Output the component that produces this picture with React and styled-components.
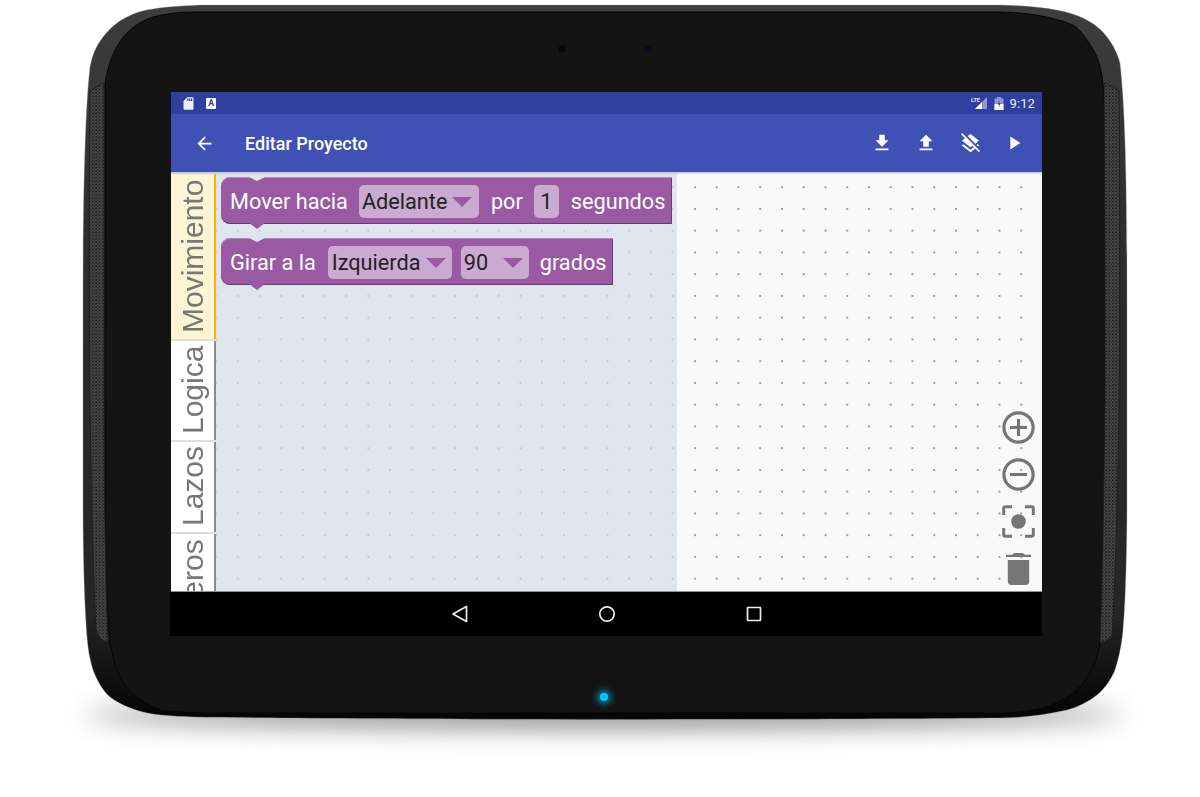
import React from "react";
import styled, { createGlobalStyle } from "styled-components";

const Global = createGlobalStyle`
  html, body { margin: 0; padding: 0; background: #fff; }
  * { box-sizing: border-box; }
`;

const Page = styled.div`
  position: relative;
  width: 1200px;
  height: 797px;
  padding: 92px 158px 161px 171px;
  overflow: hidden;
  background: #fff;
  font-family: Roboto, "Liberation Sans", sans-serif;
`;
const Bezel = styled.svg`
  position: absolute;
  left: 0;
  top: 0;
`;
const Screen = styled.div`
  position: relative;
  width: 871px;
  height: 544px;
  display: flex;
  flex-direction: column;
  background: #000;
`;
const StatusBar = styled.div`
  height: 22px;
  flex: none;
  background: #303f9f;
  display: flex;
  align-items: center;
  padding: 0 7px 0 10px;
  color: #eceef8;
`;
const StatusIcons = styled.div`
  display: flex;
  align-items: center;
  gap: ${(p) => p.$gap}px;
`;
const Spacer = styled.div`
  flex: 1;
`;
const Time = styled.span`
  font-size: 13px;
  font-weight: 400;
  letter-spacing: 0.1px;
`;
const NoteA = styled.span`
  width: 10px;
  height: 11px;
  border-radius: 1px;
  background: #fff;
  color: #303f9f;
  font-size: 8.5px;
  font-weight: 700;
  line-height: 10px;
  text-align: center;
`;
const AppBar = styled.div`
  height: 58px;
  flex: none;
  background: #3f51b5;
  display: flex;
  align-items: center;
  color: #fff;
  padding-left: 23px;
`;
const Title = styled.div`
  font-size: 18px;
  font-weight: 500;
  margin-left: 30px;
  flex: 1;
  margin-top: 1px;
`;
const Action = styled.button`
  width: 44px;
  height: 44px;
  border: 0;
  padding: 0;
  background: none;
  color: #fff;
  display: flex;
  align-items: center;
  justify-content: center;
`;
const Actions = styled.div`
  display: flex;
  padding-right: 6px;
`;
const Content = styled.div`
  position: relative;
  flex: 1;
  min-height: 0;
  display: flex;
  overflow: hidden;
  border-bottom: 1px solid #8e9094;
  &::before {
    content: "";
    position: absolute;
    left: 0;
    right: 0;
    top: 0;
    height: 3px;
    z-index: 2;
    background: linear-gradient(#c9c9cb, rgba(220, 220, 220, 0));
  }
`;
const Tabs = styled.div`
  width: 45px;
  flex: none;
  display: flex;
  flex-direction: column;
  gap: 2px;
  padding-top: 2px;
  background: #dedede;
  overflow: hidden;
`;
const Tab = styled.div`
  flex: none;
  height: ${(p) => p.$h}px;
  background: ${(p) => (p.$active ? "#fff4d4" : "#fff")};
  border-right: 2px solid ${(p) => (p.$active ? "#ffb300" : "#8b8b8b")};
  display: flex;
  justify-content: center;
  padding-bottom: 6px;
`;
const TabLabel = styled.span`
  writing-mode: vertical-rl;
  transform: rotate(180deg);
  font-family: "Liberation Sans", Arial, sans-serif;
  font-size: 30px;
  line-height: 44px;
  color: #777;
  white-space: nowrap;
  text-align: left;
`;
const Palette = styled.div`
  width: 461px;
  flex: none;
  display: flex;
  flex-direction: column;
  align-items: flex-start;
  gap: 14px;
  padding: 5px 0 0 5px;
  background-color: #dfe5ed;
  background-image: radial-gradient(circle at 50% 50%, #c8cdd3 0.8px, transparent 1.1px);
  background-size: 21.75px 21.75px;
  background-position: -10.9px 4.3px;
`;
const Block = styled.div`
  position: relative;
  height: 47px;
  display: flex;
  align-items: center;
  padding: 1px 7px 0 9px;
  color: #fff;
  background: #9a5aa3;
  border-radius: 9px 0 0 9px;
  box-shadow: inset 0 1px 0 #bb82c4, inset 0 -1px 0 #6a3a74, inset -1px 0 0 #6a3a74;
  font-size: 21.7px;
  white-space: nowrap;
  &::before {
    content: "";
    position: absolute;
    left: 28px;
    top: 0;
    width: 16px;
    height: 4px;
    background: #dfe5ed;
    clip-path: polygon(0 0, 100% 0, 50% 100%);
  }
  &::after {
    content: "";
    position: absolute;
    left: 28px;
    top: 46px;
    width: 16px;
    height: 6px;
    background: #9a5aa3;
    clip-path: polygon(0 0, 100% 0, 50% 100%);
  }
`;
const Word = styled.span`
  margin-right: ${(p) => p.$after}px;
  padding-top: 1px;
`;
const Field = styled.div`
  height: 33px;
  width: ${(p) => p.$w}px;
  flex: none;
  margin-right: ${(p) => p.$after}px;
  border-radius: 5px;
  background: #cbaad2;
  color: #222;
  display: flex;
  align-items: center;
  justify-content: ${(p) => (p.$center ? "center" : "flex-start")};
  padding-left: ${(p) => (p.$center ? 0 : p.$pad)}px;
  padding-top: 1px;
`;
const Caret = styled.span`
  width: 0;
  height: 0;
  margin-left: ${(p) => p.$left}px;
  border-left: 10px solid transparent;
  border-right: 10px solid transparent;
  border-top: 10px solid #9a5aa3;
`;
const Workspace = styled.div`
  position: relative;
  flex: 1;
  background-color: #f9f9f9;
  background-image: radial-gradient(circle at 50% 50%, #a0a0a0 0.7px, transparent 1.1px);
  background-size: 21.75px 21.75px;
  background-position: 7.1px 4.3px;
`;
const Tools = styled.div`
  position: absolute;
  right: 7px;
  bottom: 6px;
  display: flex;
  flex-direction: column;
  align-items: center;
  gap: 14px;
  color: #757575;
`;
const Trash = styled.svg`
  margin-top: 1px;
`;
const NavBar = styled.div`
  height: 44px;
  flex: none;
  background: #000;
  display: flex;
  align-items: center;
  justify-content: center;
  gap: 129px;
  padding-left: 1px;
  margin-left: -1px;
`;

const Ico = ({ d, size = 24, fill = "currentColor" }) => (
  <svg width={size} height={size} viewBox="0 0 24 24" fill={fill}>
    <path d={d} />
  </svg>
);

const OUTER =
  "M83 300C83 200 85 110 90 67C93 52 97 45 103 37C110 28 118 21 127 17C140 10 155 7 200 5L1000 5C1040 6 1065 10 1083 18C1095 24 1102 30 1107 37C1114 46 1118 55 1120 63C1124 100 1127 150 1127 300L1127 500C1127 560 1125 610 1123 630C1121 650 1118 660 1115 670C1110 682 1103 690 1097 695C1088 702 1078 707 1067 710C1045 715 1020 718 1000 718C800 720 400 720 193 717C170 716 155 715 143 712C128 708 118 703 110 697C102 690 97 680 93 670C90 660 88 650 87 637C85 610 83 570 83 500Z";
const INNER =
  "M105 300C105 200 105 130 105 83C107 72 109 65 112 57C116 47 121 39 127 33C134 26 143 20 153 17C165 14 178 12 193 12L1000 12C1035 13 1055 18 1073 25C1082 31 1090 43 1097 57C1100 65 1102 74 1103 83C1106 130 1108 200 1108 300L1108 500C1108 560 1104 610 1100 643C1098 652 1096 660 1093 667C1088 678 1081 687 1073 693C1063 700 1053 705 1043 708C1030 711 1015 713 1000 713L210 713C190 713 174 712 160 710C150 706 140 700 132 693C126 687 121 679 117 670C114 662 112 652 110 643C107 610 105 560 105 500Z";
const SPK_L =
  "M90 91C94 88 99 85 104 83C104 200 104 300 104 400C104 480 105 560 108 643C103 641 99 638 96 630C93 570 91 480 90 400C89 300 89 190 90 91Z";
const SPK_R =
  "M1104 83C1110 85 1115 87 1119 91C1120 190 1120 300 1119 400C1118 480 1116 570 1112 636C1108 640 1104 642 1100 643C1103 560 1104 480 1105 400C1105 300 1105 200 1104 83Z";

function DeviceArt() {
  return (
    <Bezel width="1200" height="797" viewBox="0 0 1200 797">
      <defs>
        <filter id="soft" x="-20%" y="-300%" width="140%" height="700%">
          <feGaussianBlur stdDeviation="13" />
        </filter>
        <filter id="led" x="-100%" y="-100%" width="300%" height="300%">
          <feGaussianBlur stdDeviation="3" />
        </filter>
        <linearGradient id="rim" x1="0" y1="0" x2="0" y2="1">
          <stop offset="0" stopColor="#3d3d3d" />
          <stop offset="0.35" stopColor="#2d2d2d" />
          <stop offset="0.85" stopColor="#252525" />
          <stop offset="0.97" stopColor="#0a0a0a" />
          <stop offset="1" stopColor="#050505" />
        </linearGradient>
        <pattern id="mesh" width="3.4" height="3.4" patternUnits="userSpaceOnUse">
          <rect width="3.4" height="3.4" fill="#4c4c4c" />
          <circle cx="1" cy="1" r="1" fill="#1c1c1c" />
          <circle cx="2.7" cy="2.7" r="0.7" fill="#252525" />
        </pattern>
      </defs>
      <ellipse cx="604" cy="715" rx="520" ry="13" fill="#000" opacity="0.45" filter="url(#soft)" />
      <path d={OUTER} fill="url(#rim)" stroke="#9a9a9a" strokeOpacity="0.35" strokeWidth="1" />
      <path d={INNER} fill="#141414" stroke="#050505" strokeWidth="1" />
      <path d={SPK_L} fill="url(#mesh)" stroke="#1a1a1a" strokeWidth="0.8" />
      <path d={SPK_R} fill="url(#mesh)" stroke="#1a1a1a" strokeWidth="0.8" />
      <circle cx="562" cy="49" r="3.5" fill="#060606" />
      <circle cx="648" cy="49" r="2.5" fill="#080818" />
      <circle cx="648" cy="49" r="1" fill="#1a1a66" />
      <circle cx="604" cy="697" r="7" fill="#00c8ff" opacity="0.6" filter="url(#led)" />
      <circle cx="604" cy="697" r="4" fill="#00ccff" />
      <circle cx="604" cy="697" r="1.8" fill="#00aee6" />
    </Bezel>
  );
}

function Signal() {
  return (
    <svg width="17" height="14" viewBox="0 0 17 14">
      <text x="0" y="6" fontFamily="Roboto, sans-serif" fontWeight="700" fontSize="5.6" fill="#e4e6f3">LTE</text>
      <path d="M4 13L16 1V13Z" fill="#8f98cf" />
      <path d="M4 13L11 6V13Z" fill="#fff" />
    </svg>
  );
}
function Battery() {
  return (
    <svg width="10" height="13" viewBox="0 0 10 13">
      <path d="M3 0H7V1.5H9.5V13H0.5V1.5H3Z" fill="#8f98cf" />
      <path d="M0.5 7H9.5V13H0.5Z" fill="#fff" />
      <path d="M5.5 3L3.5 7.5H5L4.5 10.5L6.8 6H5.2Z" fill="#303f9f" />
    </svg>
  );
}

function ToolColumn() {
  return (
    <Tools>
      <svg width="33" height="33" viewBox="0 0 33 33" fill="none" stroke="currentColor">
        <circle cx="16.5" cy="16.5" r="14.6" strokeWidth="3.2" />
        <path d="M8 16.5H25M16.5 8V25" strokeWidth="3" />
      </svg>
      <svg width="33" height="33" viewBox="0 0 33 33" fill="none" stroke="currentColor">
        <circle cx="16.5" cy="16.5" r="14.6" strokeWidth="3.2" />
        <path d="M8 16.5H25" strokeWidth="3" />
      </svg>
      <svg width="33" height="33" viewBox="0 0 33 33" fill="none" stroke="currentColor">
        <path d="M1.7 10V3.5Q1.7 1.7 3.5 1.7H10M23 1.7H29.5Q31.3 1.7 31.3 3.5V10M31.3 23V29.5Q31.3 31.3 29.5 31.3H23M10 31.3H3.5Q1.7 31.3 1.7 29.5V23" strokeWidth="3" />
        <circle cx="16.5" cy="16.5" r="7.3" fill="currentColor" stroke="none" />
      </svg>
      <Trash width="25" height="32" viewBox="5 3 14 18" preserveAspectRatio="none" fill="currentColor">
        <path d="M6 19c0 1.1.9 2 2 2h8c1.1 0 2-.9 2-2V7H6v12zM19 4h-3.5l-1-1h-5l-1 1H5v1.2h14V4z" />
      </Trash>
    </Tools>
  );
}

export default function App() {
  return (
    <Page>
      <Global />
      <DeviceArt />
      <Screen>
        <StatusBar>
          <StatusIcons $gap={10}>
            <Ico size={15} d="M18 2h-8L4.02 8 4 20c0 1.1.9 2 2 2h12c1.1 0 2-.9 2-2V4c0-1.1-.9-2-2-2zm-6 6h-2V4h2v4zm3 0h-2V4h2v4zm3 0h-2V4h2v4z" />
            <NoteA>A</NoteA>
          </StatusIcons>
          <Spacer />
          <StatusIcons $gap={6}>
            <Signal />
            <Battery />
            <Time>9:12</Time>
          </StatusIcons>
        </StatusBar>
        <AppBar>
          <Ico size={21} d="M20 11H7.83l5.59-5.59L12 4l-8 8 8 8 1.41-1.41L7.83 13H20v-2z" />
          <Title>Editar Proyecto</Title>
          <Actions>
            <Action><Ico size={22} d="M19 9h-4V3H9v6H5l7 7 7-7zM5 18v2h14v-2H5z" /></Action>
            <Action><Ico size={22} d="M9 16h6v-6h4l-7-7-7 7h4zm-4 2h14v2H5z" /></Action>
            <Action><Ico size={23} d="M19.81 14.99l1.19-.92-1.43-1.43-1.19.92 1.43 1.43zm-.45-5.27L21 9l-9-7-2.91 2.27 7.87 7.88 2.4-1.43zM3.27 1L2 2.27l4.22 4.22L3 9l1.63 1.27L12 16l2.1-1.63 1.43 1.43L12 18.54l-7.37-5.73L3 14.07l9 7 4.95-3.85L20.73 21 22 19.73 3.27 1z" /></Action>
            <Action><Ico size={22} d="M8 5v14l11-7z" /></Action>
          </Actions>
        </AppBar>
        <Content>
          <Tabs>
            <Tab $active $h={165}><TabLabel>Movimiento</TabLabel></Tab>
            <Tab $h={99}><TabLabel>Logica</TabLabel></Tab>
            <Tab $h={90}><TabLabel>Lazos</TabLabel></Tab>
            <Tab $h={133}><TabLabel>Numeros</TabLabel></Tab>
          </Tabs>
          <Palette>
            <Block>
              <Word $after={11}>Mover hacia</Word>
              <Field $w={120} $after={12} $pad={3}>Adelante<Caret $left={5} /></Field>
              <Word $after={11}>por</Word>
              <Field $w={25} $after={12} $center>1</Field>
              <Word $after={0}>segundos</Word>
            </Block>
            <Block>
              <Word $after={12}>Girar a la</Word>
              <Field $w={124} $after={9} $pad={4}>Izquierda<Caret $left={6} /></Field>
              <Field $w={68} $after={11} $pad={3}>90<Caret $left={15} /></Field>
              <Word $after={0}>grados</Word>
            </Block>
          </Palette>
          <Workspace>
            <ToolColumn />
          </Workspace>
        </Content>
        <NavBar>
          <svg width="18" height="18" viewBox="0 0 18 18" fill="none" stroke="#ececec" strokeWidth="1.7" strokeLinejoin="round">
            <path d="M15.5 1.5V16.5L2 9Z" />
          </svg>
          <svg width="18" height="18" viewBox="0 0 18 18" fill="none" stroke="#ececec" strokeWidth="1.7">
            <circle cx="9" cy="9" r="7.2" />
          </svg>
          <svg width="18" height="18" viewBox="0 0 18 18" fill="none" stroke="#ececec" strokeWidth="1.7">
            <rect x="2.5" y="2.5" width="13" height="13" rx="0.6" />
          </svg>
        </NavBar>
      </Screen>
    </Page>
  );
}
